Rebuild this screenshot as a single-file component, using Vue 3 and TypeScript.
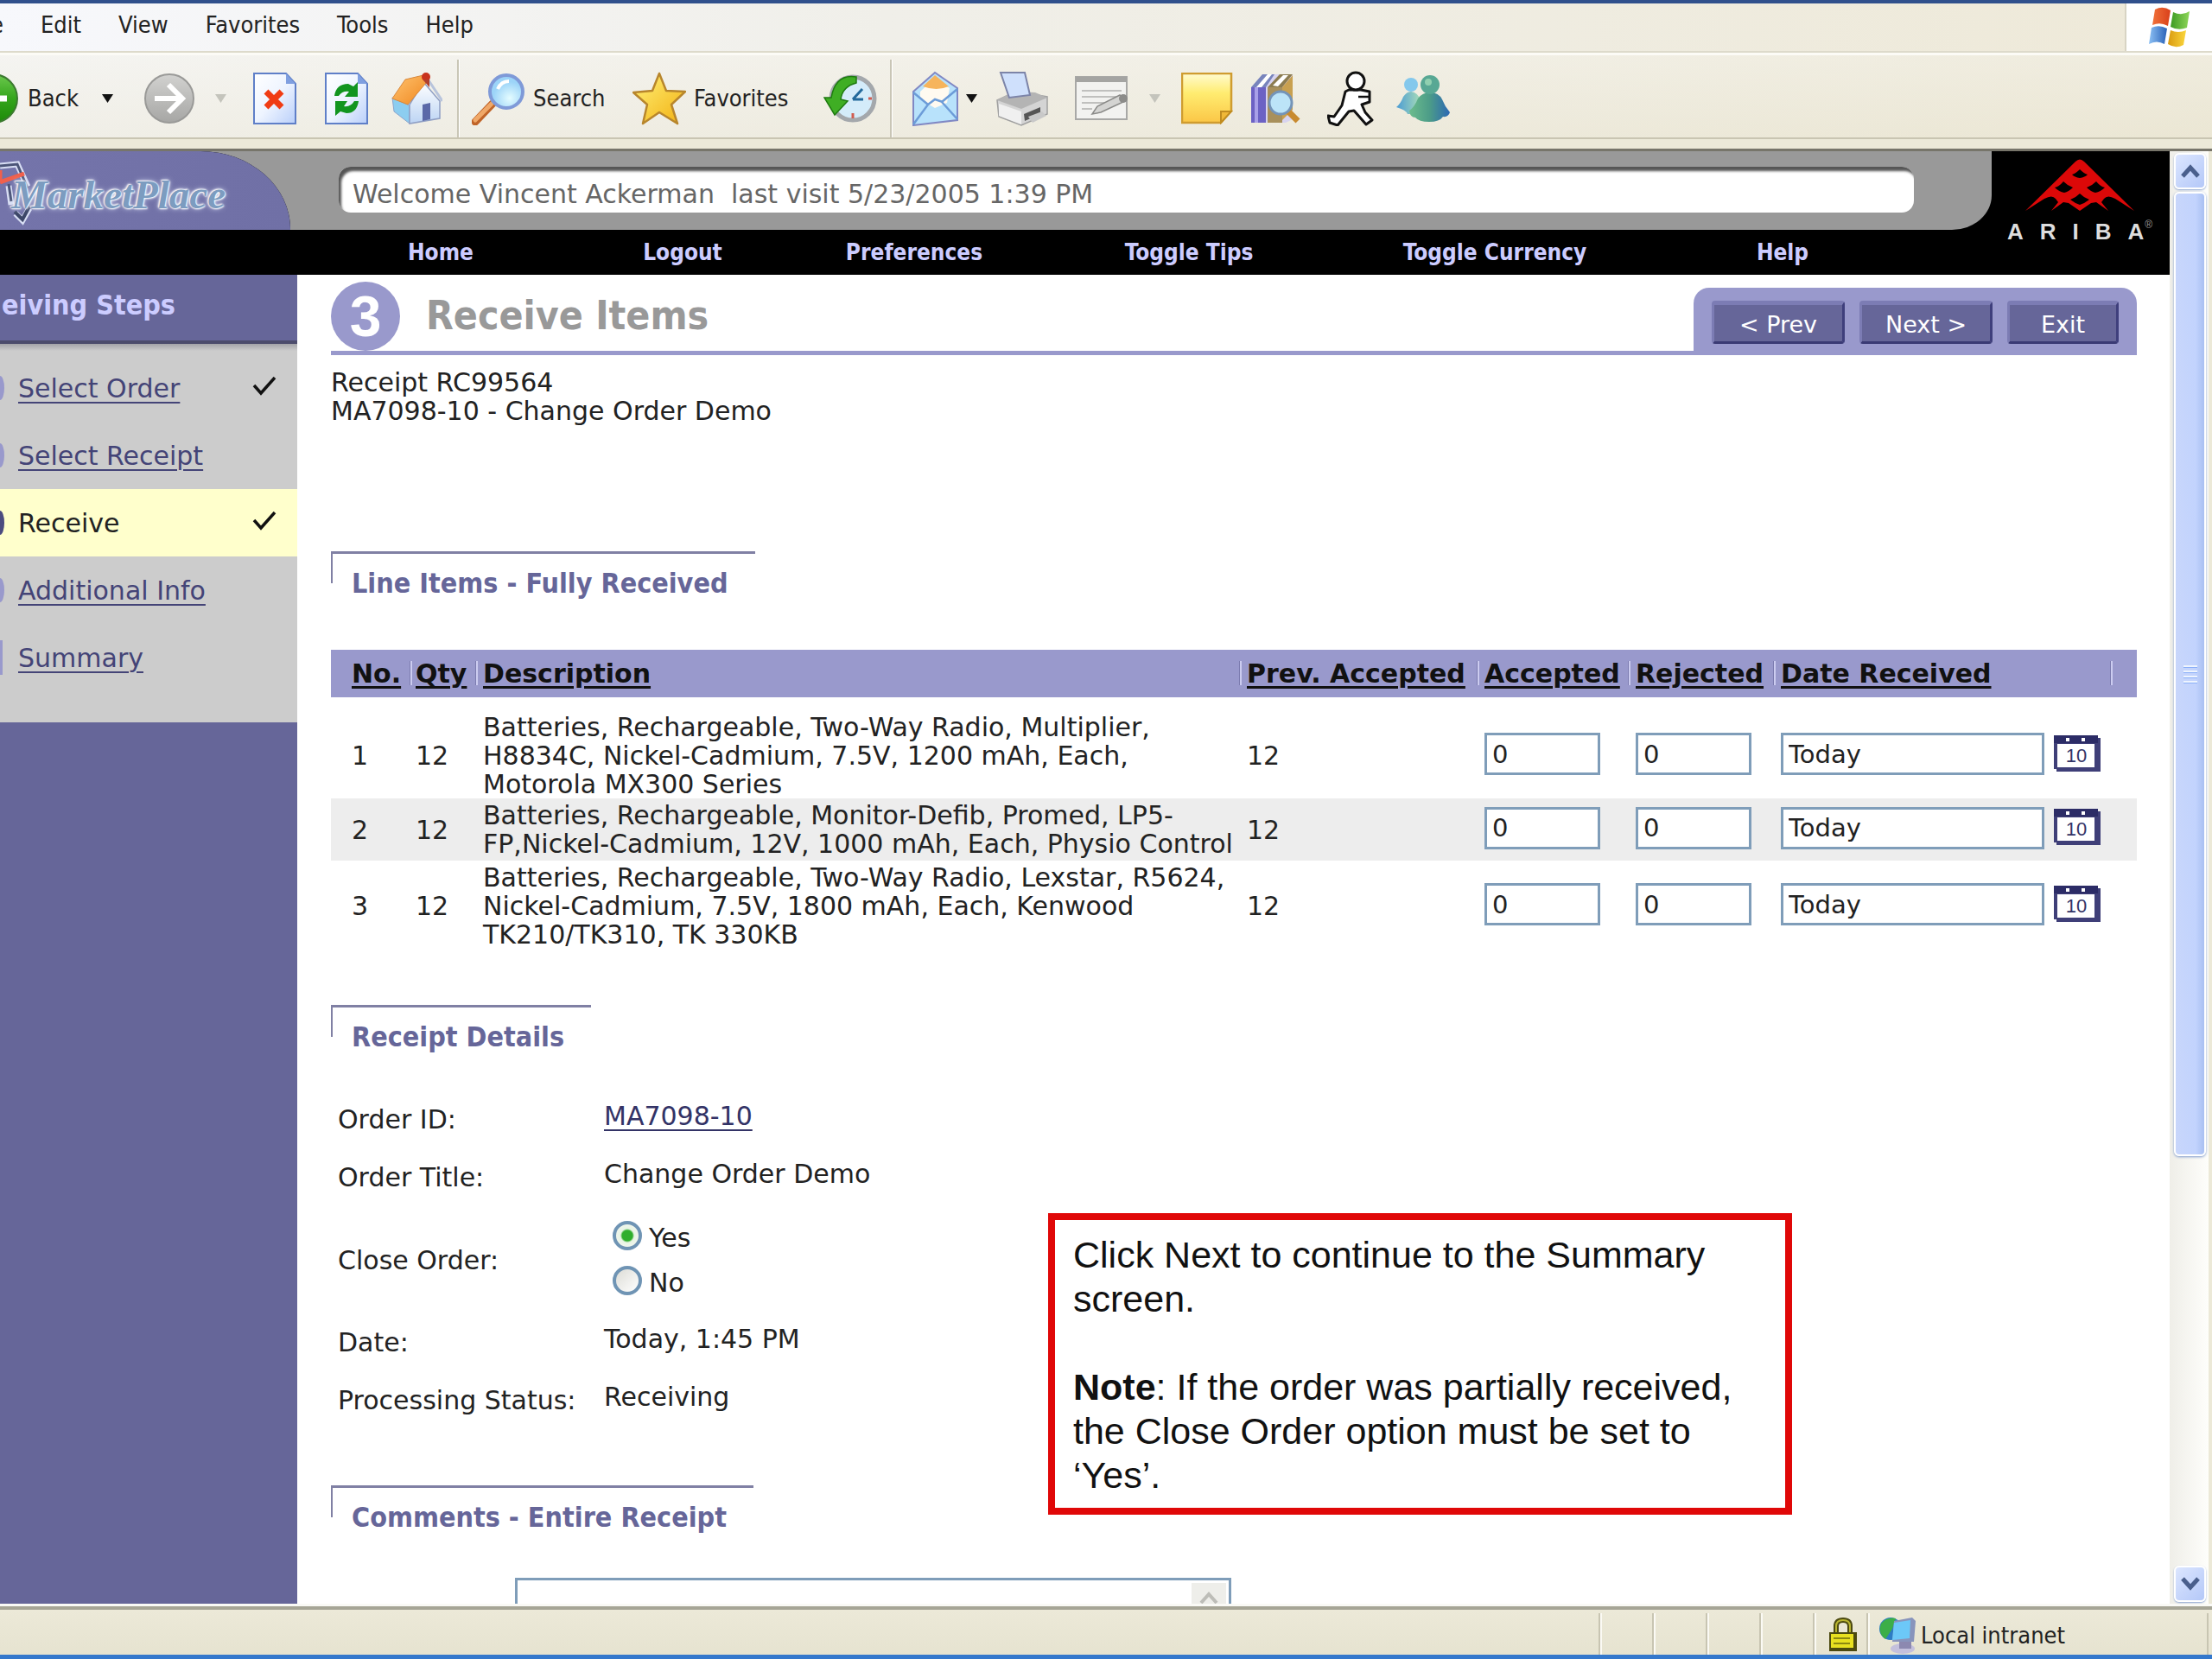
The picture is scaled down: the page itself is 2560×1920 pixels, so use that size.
<script setup lang="ts">
import { ref } from 'vue'

interface LineItem {
  no: number
  qty: number
  description: string
  prevAccepted: number
  accepted: string
  rejected: string
  date: string
}

interface Step {
  label: string
  done: boolean
  active: boolean
  shape: 'dot' | 'square'
}

const menus = ['Edit', 'View', 'Favorites', 'Tools', 'Help']
const navLinks = ['Home', 'Logout', 'Preferences', 'Toggle Tips', 'Toggle Currency', 'Help']
const columns = ['No.', 'Qty', 'Description', 'Prev. Accepted', 'Accepted', 'Rejected', 'Date Received']

const steps: Step[] = [
  { label: 'Select Order', done: true, active: false, shape: 'dot' },
  { label: 'Select Receipt', done: false, active: false, shape: 'dot' },
  { label: 'Receive', done: true, active: true, shape: 'dot' },
  { label: 'Additional Info', done: false, active: false, shape: 'dot' },
  { label: 'Summary', done: false, active: false, shape: 'square' },
]

const items = ref<LineItem[]>([
  {
    no: 1,
    qty: 12,
    description:
      'Batteries, Rechargeable, Two-Way Radio, Multiplier,\nH8834C, Nickel-Cadmium, 7.5V, 1200 mAh, Each,\nMotorola MX300 Series',
    prevAccepted: 12,
    accepted: '0',
    rejected: '0',
    date: 'Today',
  },
  {
    no: 2,
    qty: 12,
    description:
      'Batteries, Rechargeable, Monitor-Defib, Promed, LP5-\nFP,Nickel-Cadmium, 12V, 1000 mAh, Each, Physio Control',
    prevAccepted: 12,
    accepted: '0',
    rejected: '0',
    date: 'Today',
  },
  {
    no: 3,
    qty: 12,
    description:
      'Batteries, Rechargeable, Two-Way Radio, Lexstar, R5624,\nNickel-Cadmium, 7.5V, 1800 mAh, Each, Kenwood\nTK210/TK310, TK 330KB',
    prevAccepted: 12,
    accepted: '0',
    rejected: '0',
    date: 'Today',
  },
])

const closeOrder = ref('yes')
const comments = ref('')
</script>

<template>
  <div class="window">
    <nav class="menubar" aria-label="Browser menu">
      <span class="menu-cut">e</span>
      <button v-for="m in menus" :key="m" type="button">{{ m }}</button>
      <span class="flag-box">
        <svg width="52" height="48" viewBox="0 0 52 48">
          <defs>
            <linearGradient id="fr" x1="0" x2="1"><stop offset="0" stop-color="#f0713a" /><stop offset="1" stop-color="#d9401a" /></linearGradient>
            <linearGradient id="fg" x1="0" x2="1"><stop offset="0" stop-color="#3c9a22" /><stop offset="1" stop-color="#8fd65a" /></linearGradient>
            <linearGradient id="fb" x1="0" x2="1"><stop offset="0" stop-color="#8cc0f4" /><stop offset="1" stop-color="#2a62b8" /></linearGradient>
            <linearGradient id="fy" x1="0" x2="1"><stop offset="0" stop-color="#d99a10" /><stop offset="1" stop-color="#fbd63c" /></linearGradient>
          </defs>
          <path d="M9 3q9-5 18 1l-3 18q-9-5-18-1z" fill="url(#fr)" />
          <path d="M30 6q10 5 19-1l-3 19q-10 4-19-1z" fill="url(#fg)" />
          <path d="M5 24q9-4 18 1l-3 18q-9-5-18 0z" fill="url(#fb)" />
          <path d="M27 27q9 4 18 0l-3 17q-9 5-18-1z" fill="url(#fy)" />
        </svg>
      </span>
    </nav>

    <div class="toolbar">
      <button type="button" class="tool">
        <svg width="21" height="60" viewBox="0 0 21 60">
          <defs><linearGradient id="gb" x2="0" y2="1"><stop offset="0" stop-color="#6cc94e" /><stop offset=".5" stop-color="#35a51c" /><stop offset="1" stop-color="#1c8a08" /></linearGradient></defs>
          <circle cx="-8" cy="30" r="28" fill="url(#gb)" stroke="#3c7a30" stroke-width="2" />
          <path d="M0 30h8" stroke="#fff" stroke-width="7" />
        </svg>
        <span class="back-label">Back</span>
      </button>
      <button type="button" class="tool" aria-label="Back history"><svg width="13" height="10"><path d="M0 0h13L6.500 10z" fill="#111" /></svg></button>
      <button type="button" class="tool" aria-label="Forward">
        <svg width="60" height="60" viewBox="0 0 60 60">
          <defs><linearGradient id="gf" x2="0" y2="1"><stop offset="0" stop-color="#d2d2d0" /><stop offset="1" stop-color="#a6a6a4" /></linearGradient></defs>
          <circle cx="30" cy="30" r="28" fill="url(#gf)" stroke="#9a9a98" stroke-width="2" />
          <path d="M13 30h30M29 14l16 16-16 16" fill="none" stroke="#fff" stroke-width="6" />
        </svg>
      </button>
      <button type="button" class="tool" aria-label="Forward history"><svg width="13" height="10"><path d="M0 0h13L6.500 10z" fill="#c4c4bc" /></svg></button>
      <button type="button" class="tool" aria-label="Stop">
        <svg width="50" height="60" viewBox="0 0 50 60">
          <defs><linearGradient id="pg" x2="1" y2="1"><stop offset="0" stop-color="#fff" /><stop offset=".5" stop-color="#eef4ff" /><stop offset="1" stop-color="#b9cffa" /></linearGradient></defs>
          <path d="M1 1h37l11 12v46H1z" fill="url(#pg)" stroke="#5f7fc8" stroke-width="2" />
          <path d="M38 1l11 12H38z" fill="#7f9fe0" />
          <path d="M15 22l18 18M33 22L15 40" stroke="#f03c14" stroke-width="7" />
        </svg>
      </button>
      <button type="button" class="tool" aria-label="Refresh">
        <svg width="50" height="60" viewBox="0 0 50 60">
          <path d="M1 1h37l11 12v46H1z" fill="url(#pg)" stroke="#5f7fc8" stroke-width="2" />
          <path d="M38 1l11 12H38z" fill="#7f9fe0" />
          <path d="M11 27q2-14 16-14l6 3 5-5v17H23l5-6q-8-1-12 5z" fill="#12951f" />
          <path d="M39 33q-2 14-14 14l-7-2-6 5V33h14l-4 6q8 1 12-6z" fill="#12951f" />
        </svg>
      </button>
      <button type="button" class="tool" aria-label="Home page">
        <svg width="60" height="62" viewBox="0 0 60 62">
          <defs>
            <linearGradient id="hr" x2="1" y2="1"><stop offset="0" stop-color="#ffc470" /><stop offset="1" stop-color="#f08820" /></linearGradient>
            <linearGradient id="hw" x2="0" y2="1"><stop offset="0" stop-color="#fff" /><stop offset="1" stop-color="#bcd4f4" /></linearGradient>
          </defs>
          <path d="M2 30l20 9v21L4 46z" fill="#8ccdf0" stroke="#8aa4cc" />
          <path d="M38 12l19 22v20L22 60V38z" fill="url(#hw)" stroke="#8f9fc4" stroke-width="1.500" />
          <path d="M2 31L17 9l21-5 3 9-21 25z" fill="url(#hr)" stroke="#d8883c" />
          <path d="M40 4l20 30" stroke="#b8c4dc" stroke-width="3" />
          <path d="M37 38l9-2v19l-9 2z" fill="#5a68a8" />
          <circle cx="41" cy="6" r="5" fill="#c8321c" /><path d="M38 9h7v9l-7-8z" fill="#b0402c" />
        </svg>
      </button>
      <span class="sep"></span>
      <button type="button" class="tool">
        <svg width="62" height="62" viewBox="0 0 62 62">
          <defs><radialGradient id="lens" cx=".6" cy=".7"><stop offset="0" stop-color="#e4fcff" /><stop offset="1" stop-color="#9cd4f8" /></radialGradient></defs>
          <path d="M24 37L4 58" stroke="#c06428" stroke-width="9" stroke-linecap="round" />
          <path d="M23 37L4 56" stroke="#f0a868" stroke-width="5" stroke-linecap="round" />
          <circle cx="40" cy="23" r="19" fill="url(#lens)" stroke="#7f9ad8" stroke-width="4" />
          <path d="M30 20q4-9 13-9" stroke="#fff" stroke-width="4" fill="none" />
        </svg>
        <span class="label">Search</span>
      </button>
      <button type="button" class="tool">
        <svg width="62" height="62" viewBox="0 0 62 62">
          <defs><linearGradient id="st" x2="1" y2="1"><stop offset="0" stop-color="#fff27a" /><stop offset="1" stop-color="#f2b010" /></linearGradient></defs>
          <path d="M31 2l8 20 22 1-16 15 7 22-21-13-19 13 5-22L1 24l22-2z" fill="url(#st)" stroke="#b8862c" stroke-width="2.500" stroke-linejoin="round" />
        </svg>
        <span class="label">Favorites</span>
      </button>
      <button type="button" class="tool" aria-label="History">
        <svg width="62" height="60" viewBox="0 0 62 60">
          <circle cx="34" cy="30" r="25" fill="#d4ecfa" stroke="#a4a8ac" stroke-width="5" />
          <path d="M34 31l11-12M34 31h12" stroke="#246a9c" stroke-width="3" />
          <path d="M34 47v6M52 30h4" stroke="#d05c50" stroke-width="3" />
          <path d="M38 5Q14 1 9 29H1l12 20 15-16-8-2q2-15 18-19z" fill="#3fae24" stroke="#1e7a10" stroke-width="1.500" />
        </svg>
      </button>
      <span class="sep"></span>
      <button type="button" class="tool" aria-label="Mail">
        <svg width="54" height="64" viewBox="0 0 54 64">
          <path d="M1 24L26 2l26 18v37L1 63z" fill="#b8e2fb" stroke="#8088c4" stroke-width="2" />
          <path d="M9 24L26 8l17 12-3 17-14 6-17-10z" fill="#fffaf0" />
          <path d="M12 18L26 5l16 13q-14 6-30 0z" fill="#f6b45c" />
          <path d="M1 25l17 14L1 62M52 21L34 36l18 20M18 39l8-6 9 3" fill="none" stroke="#6c9cd8" stroke-width="2.500" />
        </svg>
      </button>
      <button type="button" class="tool" aria-label="Mail options"><svg width="13" height="10"><path d="M0 0h13L6.500 10z" fill="#111" /></svg></button>
      <button type="button" class="tool" aria-label="Print">
        <svg width="62" height="64" viewBox="0 0 62 64">
          <path d="M2 34l22-10 36 6v20L30 63 4 53z" fill="#d4d4d4" stroke="#a0a0a0" stroke-width="1.500" />
          <path d="M2 34l28 10 30-13-14-6-26-1z" fill="#b4b4b4" />
          <path d="M4 38l26 9v15L4 52z" fill="#f0f0f0" />
          <path d="M33 50l19-8v8l-18 8z" fill="#555" /><path d="M38 53l16-6 5 5-16 8z" fill="#c8c8c8" />
          <path d="M6 2h28l6 26-24 3z" fill="#cfe0fc" stroke="#7c84a8" stroke-width="2" />
        </svg>
      </button>
      <button type="button" class="tool" aria-label="Edit page">
        <svg width="64" height="52" viewBox="0 0 64 52">
          <path d="M1 1h59v49H1z" fill="#f2f2f0" stroke="#a8a8a6" stroke-width="2" />
          <path d="M1 1h59v6H1z" fill="#a4a4a2" />
          <path d="M8 17h46M8 24h40M8 31h30M8 38h12" stroke="#c0c0be" stroke-width="2" />
          <path d="M20 44l6-9 26-13 6 7-28 13z" fill="#d4d4d2" stroke="#8a8a88" stroke-width="1.500" />
          <circle cx="56" cy="26" r="5" fill="#8c8c8a" />
        </svg>
      </button>
      <button type="button" class="tool" aria-label="Edit options"><svg width="13" height="10"><path d="M0 0h13L6.500 10z" fill="#c4c4bc" /></svg></button>
      <button type="button" class="tool" aria-label="Notes">
        <svg width="60" height="60" viewBox="0 0 60 60">
          <defs><linearGradient id="nt" x2="0" y2="1"><stop offset="0" stop-color="#fffbd0" /><stop offset=".4" stop-color="#ffec70" /><stop offset="1" stop-color="#fbc646" /></linearGradient></defs>
          <path d="M1 1h57v43L46 58H1z" fill="url(#nt)" stroke="#cf9c30" stroke-width="2.500" />
          <path d="M46 58V45h12z" fill="#f0b838" stroke="#c08c20" stroke-width="2" />
        </svg>
      </button>
      <button type="button" class="tool" aria-label="Research">
        <svg width="60" height="58" viewBox="0 0 60 58">
          <path d="M1 16L15 1h34v52l-8 4H1z" fill="#d8d4f0" />
          <path d="M1 16h17v41H1z" fill="#6c62c4" /><path d="M5 16h4v41H5z" fill="#a8a0e8" />
          <path d="M1 16L14 1h14L18 16z" fill="#7884bc" /><path d="M7 16L20 1h5L13 16z" fill="#fff" />
          <path d="M20 16h17v41H20z" fill="#a8905c" /><path d="M20 16L34 1h15L37 16z" fill="#8c7c50" /><path d="M26 14L38 2h6L32 15z" fill="#fff" />
          <path d="M37 16L49 2v40l-12 12z" fill="#c8a050" />
          <path d="M43 43l12 12" stroke="#c88a30" stroke-width="7" />
          <circle cx="35" cy="34" r="13" fill="#bce4f8" stroke="#7494b8" stroke-width="3" />
        </svg>
      </button>
      <button type="button" class="tool" aria-label="Instant messenger">
        <svg width="54" height="64" viewBox="0 0 54 64">
          <g fill="#fff" stroke="#111" stroke-width="3" stroke-linejoin="round">
            <path d="M25 22h14l10 2v12l-9 3 4 9 8 9-7 5-14-16-6 1L12 63l-9-3-2-8 7 1 9-13 4-16z" />
            <circle cx="33" cy="12" r="10" />
          </g>
          <path d="M36 30h12" stroke="#111" stroke-width="2.500" />
        </svg>
      </button>
      <button type="button" class="tool" aria-label="Messenger">
        <svg width="64" height="56" viewBox="0 0 64 56">
          <defs>
            <linearGradient id="m1" x2="1"><stop offset="0" stop-color="#6cbc8c" /><stop offset=".5" stop-color="#4c9c88" /><stop offset="1" stop-color="#2c68b4" /></linearGradient>
            <linearGradient id="m2" x2="1"><stop offset="0" stop-color="#4c9cd4" /><stop offset="1" stop-color="#a8dcb8" /></linearGradient>
          </defs>
          <circle cx="18" cy="12" r="8" fill="#84c8ec" />
          <path d="M1 38q5-4 8-12 4-6 9-6 8 1 11 10l-1 16H14q-2-5-13-8z" fill="url(#m2)" />
          <path d="M16 42q6-4 10-14 5-7 14-7 10 0 14 8 3 8 9 15-2 6-8 5-4 6-16 6t-16-5q-6 0-7-8z" fill="url(#m1)" />
          <circle cx="40" cy="12" r="11" fill="#58a894" />
          <circle cx="38" cy="9" r="4" fill="#90d0b0" />
        </svg>
      </button>
    </div>
    <div class="band"></div>

    <div class="viewport">
      <div class="page">
        <header class="masthead">
          <div class="brand">
            <svg class="cart" width="50" height="78" viewBox="0 0 50 78">
              <g fill="none" stroke="#d8def4" stroke-width="7"><path d="M0 7l20-2 12 26M10 30l3 22M18 62l8 8 8-14" /></g>
              <path d="M0 7l20-2 12 28M10 28l3 20" fill="none" stroke="#4c5578" stroke-width="3" />
              <path d="M0 26l28-10M0 12v14" stroke="#f0604c" stroke-width="5" />
              <path d="M17 60l9 9 8-15" fill="none" stroke="#3c4668" stroke-width="4" />
            </svg>
            <span class="brand-name">MarketPlace</span>
          </div>
          <div class="banner">
            <p class="welcome">Welcome Vincent Ackerman&nbsp; last visit 5/23/2005 1:39 PM</p>
          </div>
          <div class="ariba">
            <svg width="126" height="60" viewBox="0 0 126 60">
              <path d="M58 3q5-5 10 0L126 60 104 46q-9-5-13 0l-3 4 8 10-14-10-6 1-13 9-13-9-6-1-14 10 8-10-3-4q-4-5-13 0L0 60z" fill="#dc0808" />
              <g fill="#000">
                <path d="M54 18q4-1 9-6 5 5 9 6-3 3-9 4-6-1-9-4z" />
                <path d="M34 33q5-1 10-7 5 5 11 7-5 5-10 6-6-1-11-6zM92 33q-5-1-10-7-5 5-11 7 5 5 10 6 6-1 11-6z" />
                <path d="M52 47q6-2 11-7 5 5 11 7-5 4-11 6-6-2-11-6z" />
              </g>
            </svg>
            <span class="ariba-name"><b v-for="(l, i) in 'ARIBA'" :key="i">{{ l }}</b><sup>®</sup></span>
          </div>
          <nav class="site-nav" aria-label="Site">
            <a v-for="n in navLinks" :key="n" href="#">{{ n }}</a>
          </nav>
        </header>

        <div class="columns">
          <aside class="sidebar">
            <h2>eiving Steps</h2>
            <ol>
              <li v-for="s in steps" :key="s.label" :class="{ active: s.active }">
                <i :class="s.shape"></i>
                <span v-if="s.active">{{ s.label }}</span>
                <a v-else href="#">{{ s.label }}</a>
                <svg v-if="s.done" width="28" height="22" viewBox="0 0 28 22"><path d="M2 10l8 9L26 1" fill="none" stroke="#111" stroke-width="3.500" /></svg>
              </li>
            </ol>
          </aside>

          <main>
            <div class="title-row">
              <span class="step-no">3</span>
              <h1>Receive Items</h1>
              <div class="actions">
                <button type="button">&lt; Prev</button>
                <button type="button">Next &gt;</button>
                <button type="button" class="exit">Exit</button>
              </div>
            </div>
            <p class="receipt">Receipt RC99564<br />MA7098-10 - Change Order Demo</p>

            <h3>Line Items - Fully Received</h3>
            <table>
              <colgroup>
                <col class="c-no" /><col class="c-qty" /><col /><col class="c-prev" /><col class="c-acc" /><col class="c-rej" /><col class="c-date" /><col class="c-end" />
              </colgroup>
              <thead>
                <tr>
                  <th v-for="c in columns" :key="c" scope="col"><a href="#">{{ c }}</a></th>
                  <td></td>
                </tr>
              </thead>
              <tbody>
                <tr v-for="r in items" :key="r.no">
                  <td>{{ r.no }}</td>
                  <td>{{ r.qty }}</td>
                  <td class="desc">{{ r.description }}</td>
                  <td>{{ r.prevAccepted }}</td>
                  <td><input v-model="r.accepted" type="text" class="num" :aria-label="`Accepted, line ${r.no}`" /></td>
                  <td><input v-model="r.rejected" type="text" class="num" :aria-label="`Rejected, line ${r.no}`" /></td>
                  <td colspan="2">
                    <div class="date-cell">
                      <input v-model="r.date" type="text" class="date" :aria-label="`Date received, line ${r.no}`" />
                      <button type="button" class="cal" aria-label="Pick a date">
                        <svg width="54" height="42" viewBox="0 0 54 42">
                          <path d="M0 0h51v3h3v39H3v-3H0z" fill="#3f3f78" />
                          <path d="M4 10h43v27H4z" fill="#fff" />
                          <path d="M0 0h51v9H0z" fill="#2c2c66" />
                          <path d="M14 3h4v4h-4zM32 3h4v4h-4z" fill="#fff" />
                          <text x="26" y="31" text-anchor="middle" font-size="22" fill="#333366">10</text>
                        </svg>
                      </button>
                    </div>
                  </td>
                </tr>
              </tbody>
            </table>

            <h3 class="details-head">Receipt Details</h3>
            <dl>
              <dt>Order ID:</dt>
              <dd><a href="#">MA7098-10</a></dd>
              <dt>Order Title:</dt>
              <dd>Change Order Demo</dd>
              <dt>Close Order:</dt>
              <dd class="options">
                <label><input v-model="closeOrder" type="radio" name="close" value="yes" />Yes</label>
                <label><input v-model="closeOrder" type="radio" name="close" value="no" />No</label>
              </dd>
              <dt>Date:</dt>
              <dd>Today, 1:45 PM</dd>
              <dt>Processing Status:</dt>
              <dd>Receiving</dd>
            </dl>

            <h3 class="comments-head">Comments - Entire Receipt</h3>
            <div class="comment-box">
              <textarea v-model="comments" aria-label="Comments - Entire Receipt"></textarea>
              <div class="comment-scroll">
                <svg width="22" height="14" viewBox="0 0 22 14"><path d="M2 13l9-10 9 10" fill="none" stroke="#bdbdb8" stroke-width="4" /></svg>
              </div>
            </div>
          </main>
        </div>
      </div>

      <div class="scrollbar">
        <button type="button" aria-label="Scroll up"><svg width="22" height="16" viewBox="0 0 22 16"><path d="M2 14l9-10 9 10" fill="none" stroke="#4a5f8c" stroke-width="5" /></svg></button>
        <div class="thumb"><i></i><i></i><i></i><i></i></div>
        <button type="button" aria-label="Scroll down"><svg width="22" height="16" viewBox="0 0 22 16"><path d="M2 2l9 10 9-10" fill="none" stroke="#4a5f8c" stroke-width="5" /></svg></button>
      </div>
    </div>

    <footer class="status">
      <span class="pane"></span><span class="pane"></span><span class="pane"></span><span class="pane"></span>
      <span class="pane lock">
        <svg width="34" height="40" viewBox="0 0 34 40">
          <path d="M9 18v-8q0-7 8-7t8 7v8" fill="none" stroke="#4c4a10" stroke-width="6" /><path d="M9 18v-8q0-7 8-7t8 7v8" fill="none" stroke="#b8b430" stroke-width="2" />
          <path d="M1 17h32v22H1z" fill="#4c4a10" /><path d="M3 19h26v16H3z" fill="#e8e020" />
          <path d="M6 24h19M6 30h19" stroke="#8c8810" stroke-width="2" />
        </svg>
      </span>
      <span class="pane zone">
        <svg width="44" height="44" viewBox="0 0 44 44">
          <circle cx="14" cy="14" r="13" fill="#2c7cc4" /><path d="M3 8Q10 0 20 2l-4 12-8 12Q-1 20 3 8z" fill="#3cae48" />
          <ellipse cx="28" cy="37" rx="14" ry="6" fill="#c4c0dc" /><path d="M24 28h14v9H24z" fill="#8c88b0" />
          <path d="M18 5l21-4 4 4-2 24-25 0z" fill="#8894bc" /><path d="M18 7l19-3-1 21-20 2z" fill="#6cc8f8" />
        </svg>
        <span>Local intranet</span>
      </span>
    </footer>

    <aside class="callout">
      <p>Click Next to continue to the Summary<br />screen.</p>
      <p><b>Note</b>: If the order was partially received,<br />the Close Order option must be set to<br />‘Yes’.</p>
    </aside>
  </div>
</template>

<style>
body {
  margin: 0;
  background: #ece9d8;
}
</style>

<style scoped>
.window {
  --ui: 'DejaVu Sans Condensed', 'DejaVu Sans', sans-serif;
  --body: 'DejaVu Sans', sans-serif;
  position: relative;
  display: flex;
  flex-direction: column;
  height: 100vh;
  overflow: hidden;
  box-sizing: border-box;
  border-top: 4px solid #30508c;
  border-bottom: 5px solid #3478cc;
  background: #ece9d8;
  color: #222;
  font: 30px/33px var(--body);
}
.window * {
  box-sizing: border-box;
}
h1,
h2,
h3,
p,
ol,
dl,
dd {
  margin: 0;
  padding: 0;
}
button {
  border: 0;
  padding: 0;
  background: none;
  color: inherit;
  font: inherit;
}
svg {
  display: block;
  flex: none;
}

/* browser chrome */
.menubar {
  flex: 0 0 57px;
  display: flex;
  align-items: center;
  gap: 43px;
  border-bottom: 2px solid #dddacb;
  background: linear-gradient(90deg, #f7f8fc, #f0efe9 40%, #eee9d8);
  font: 27px/32px var(--ui);
  color: #222;
}
.menubar > button,
.menu-cut {
  padding-bottom: 5px;
}
.menu-cut {
  width: 4px;
  display: flex;
  justify-content: flex-end;
  overflow: hidden;
}
.flag-box {
  align-self: stretch;
  width: 101px;
  margin-left: auto;
  display: flex;
  align-items: center;
  justify-content: center;
  background: #fff;
  border-left: 2px solid #d8d4c4;
}
.toolbar {
  flex: 0 0 100px;
  display: grid;
  grid-template-columns: 118px 48px 83px 44px 83px 76px 77px 17px 186px 221px 77px 26px 62px 34px 92px 86px 37px 80px 89px 79px 1fr;
  align-items: center;
  justify-items: start;
  padding-top: 4px;
  border-top: 3px solid #fcfbf6;
  border-bottom: 2px solid #c9c5b2;
  background: linear-gradient(90deg, rgba(248, 248, 250, 0.5), rgba(238, 232, 212, 0.5)), linear-gradient(#f1f0e8, #e8e5d4);
  font: 27px/32px var(--ui);
}
.tool {
  display: flex;
  align-items: center;
}
.back-label {
  padding-left: 11px;
}
.label {
  padding-left: 9px;
}
.sep {
  width: 3px;
  height: 90px;
  background: #c9c6b6;
  border-right: 1px solid #fff;
}
.band {
  flex: 0 0 14px;
  background: #ece9d8;
  border-bottom: 3px solid #77756a;
}

/* page area */
.viewport {
  flex: 1 1 0;
  min-height: 0;
  display: flex;
  padding-right: 4px;
  border-bottom: 3px solid #fafaf6;
}
.page {
  flex: 1;
  min-width: 0;
  display: flex;
  flex-direction: column;
  overflow: hidden;
  background: #fff;
}
.masthead {
  flex: none;
  display: grid;
  grid-template-columns: 336px 1fr 206px;
  grid-template-rows: 91px 52px;
  background: #000;
}
.brand {
  position: relative;
  background: linear-gradient(90deg, #7474aa, #7070a6);
  border-top-right-radius: 104px 90px;
  box-shadow: 0 0 0 100px #999;
  clip-path: inset(0);
  padding: 22px 0 0 13px;
}
.cart {
  position: absolute;
  left: 0;
  top: 10px;
}
.brand-name {
  position: relative;
  font: italic 700 47px/56px 'Liberation Serif', serif;
  color: #7c9cc0;
  text-shadow: 0 0 2px #fff, 1px 1px 2px #fff, -1px -1px 2px #fff, 0 0 6px #dfe8ff;
}
.banner {
  padding: 18px 90px 20px 56px;
  background: #999;
  border-bottom-right-radius: 46px 40px;
}
.welcome {
  height: 53px;
  padding: 10px 16px 0 16px;
  border-radius: 14px;
  background: #fff;
  box-shadow: inset 3px 5px 3px #555;
  color: #666;
  display: flex;
  align-items: center;
}
.ariba {
  grid-row: 1 / 3;
  grid-column: 3;
  display: flex;
  flex-direction: column;
  align-items: center;
  padding: 9px 16px 0 14px;
}
.ariba-name {
  display: flex;
  justify-content: space-between;
  width: 168px;
  margin-top: 9px;
  font: 26px/30px 'Liberation Sans', sans-serif;
  color: #ddd;
}
.ariba-name sup {
  margin-left: -18px;
  font-size: 12px;
  line-height: 14px;
  color: #999;
}
.site-nav {
  grid-row: 2;
  grid-column: 1 / 3;
  display: grid;
  grid-template-columns: 280fr 280fr 256fr 380fr 328fr 338fr;
  align-items: center;
  justify-items: center;
  padding: 0 73px 0 370px;
  font: 700 26px/32px var(--ui);
}
.site-nav a {
  color: #ccccff;
  text-decoration: none;
}
.columns {
  flex: 1;
  min-height: 0;
  display: flex;
}

/* sidebar */
.sidebar {
  flex: 0 0 344px;
  background: #666699;
}
.sidebar h2 {
  height: 80px;
  padding: 16px 0 0 2px;
  border-bottom: 4px solid #4c4c6c;
  font: 700 32px/38px var(--ui);
  color: #ccccff;
}
.sidebar ol {
  list-style: none;
  padding: 12px 0 36px;
  background: linear-gradient(#a4a4a8, #ccc 8px);
}
.sidebar li {
  display: flex;
  align-items: center;
  height: 78px;
  padding-right: 24px;
}
.sidebar li svg {
  margin: 0 0 4px auto;
}
.sidebar li.active {
  background: #ffffcc;
}
.sidebar a {
  color: #444477;
  text-decoration-thickness: 2px;
  text-underline-offset: 5px;
}
.sidebar i {
  width: 5px;
  height: 28px;
  margin-right: 16px;
  background: #9999cc;
}
.sidebar .dot {
  border-radius: 0 5px 5px 0 / 0 14px 14px 0;
}
.sidebar .square {
  width: 3px;
  height: 40px;
  margin-right: 18px;
}
.sidebar .active i {
  background: #4c4c80;
}

/* content */
main {
  flex: 1;
  min-width: 0;
  padding: 0 38px 0 39px;
}
.title-row {
  height: 93px;
  display: flex;
  align-items: flex-end;
  border-bottom: 5px solid #9999cc;
}
.step-no {
  width: 80px;
  height: 80px;
  border-radius: 50%;
  background: #9999cc;
  color: #fff;
  font: 700 66px/80px 'Liberation Sans', sans-serif;
  text-align: center;
}
h1 {
  margin-left: 30px;
  font: 700 46px/82px var(--ui);
  color: #999;
}
.actions {
  display: flex;
  gap: 17px;
  height: 78px;
  margin: 0 0 -5px auto;
  padding: 15px 21px 0;
  border-radius: 18px 18px 0 0;
  background: #9999cc;
}
.actions button {
  width: 154px;
  height: 50px;
  padding-top: 2px;
  border: 3px solid;
  border-color: #7c7cb4 #3f3f7c #3a3a74 #7c7cb4;
  border-top-width: 5px;
  border-radius: 4px;
  background: #666699;
  color: #fff;
  font-size: 27px;
}
.actions .exit {
  width: 129px;
}
.receipt {
  padding: 15px 0 146px;
}
h3 {
  position: relative;
  width: fit-content;
  margin-bottom: 58px;
  padding: 15px 31px 0 24px;
  border-top: 3px solid #8080a4;
  font: 700 32px/38px var(--ui);
  color: #666699;
}
h3::before {
  content: '';
  position: absolute;
  left: 0;
  top: 0;
  width: 2px;
  height: 34px;
  background: #8080a4;
}
.details-head {
  margin: 62px 0 43px;
}
.comments-head {
  margin: 65px 0 51px;
}
table {
  width: 100%;
  table-layout: fixed;
  border-collapse: collapse;
}
.c-no {
  width: 91px;
}
.c-qty {
  width: 76px;
}
.c-prev {
  width: 275px;
}
.c-acc {
  width: 175px;
}
.c-rej {
  width: 168px;
}
.c-date {
  width: 390px;
}
.c-end {
  width: 31px;
}
thead tr {
  height: 55px;
  background: #9999cc;
}
th,
td {
  padding: 0 0 0 9px;
  text-align: left;
  vertical-align: middle;
  white-space: nowrap;
}
th:first-child,
td:first-child {
  padding-left: 24px;
}
th:nth-child(2),
td:nth-child(2) {
  padding-left: 7px;
}
thead th:not(:first-child),
thead td {
  background: linear-gradient(90deg, #7c7cb0 1px, #ccccf0 1px) no-repeat 0 13px / 3px 28px;
}
th a {
  color: #111;
  text-decoration-thickness: 3px;
  text-underline-offset: 4px;
}
tbody tr:nth-child(even) {
  background: #ededed;
}
tbody td {
  padding-top: 3px;
  padding-bottom: 3px;
}
tbody tr:first-child td {
  padding-top: 18px;
  padding-bottom: 0;
}
.desc {
  white-space: pre;
}
.num,
.date {
  display: block;
  height: 49px;
  margin-bottom: 4px;
  padding: 0 6px;
  border: 3px solid #7f9db9;
  background: #fff;
  color: #222;
  font: 29px/40px var(--body);
}
.num {
  width: 134px;
}
.date {
  width: 305px;
}
.date-cell {
  display: flex;
  align-items: center;
  gap: 11px;
}
.cal {
  margin-bottom: 6px;
  font-family: 'Liberation Sans', sans-serif;
}
dl {
  display: grid;
  grid-template-columns: 308px 1fr;
  grid-template-rows: 67px 67px 124px 67px 67px;
  align-items: center;
  padding-left: 8px;
}
dd {
  padding-bottom: 8px;
}
dd a {
  color: #333366;
  text-decoration-thickness: 2px;
  text-underline-offset: 5px;
}
.options {
  display: grid;
  gap: 14px;
  padding: 0 0 0 10px;
}
.options label {
  display: flex;
  align-items: center;
  gap: 8px;
}
.options input {
  appearance: none;
  width: 34px;
  height: 34px;
  margin: 0 0 4px;
  border: 4px solid #6f94b4;
  border-radius: 50%;
  background: linear-gradient(135deg, #dcdcd6, #fff);
}
.options input:checked {
  background: radial-gradient(circle, #2fae2c 0 6px, #e8f4e4 8px, #f8f8f4);
}
.comment-box {
  display: flex;
  width: 829px;
  height: 240px;
  margin-left: 213px;
  border: 3px solid #7f9db9;
}
textarea {
  flex: 1;
  border: 0;
  padding: 6px;
  background: #fff;
  resize: none;
  font: inherit;
}
.comment-scroll {
  width: 40px;
  margin: 3px 3px 0 0;
  padding: 10px 0 0 9px;
  background: #eeeeea;
}

/* scrollbar */
.scrollbar {
  flex: 0 0 45px;
  display: flex;
  flex-direction: column;
  padding: 2px 3px 2px 5px;
  background: linear-gradient(90deg, #efeee8, #fefefb);
}
.scrollbar button {
  flex: 0 0 42px;
  display: flex;
  align-items: center;
  justify-content: center;
  border: 2px solid #fff;
  border-radius: 6px;
  background: linear-gradient(135deg, #dce6ff, #b4c8f8);
  box-shadow: 0 1px 2px #8ca4d0;
}
.thumb {
  flex: 0 1 1116px;
  display: flex;
  flex-direction: column;
  align-items: center;
  justify-content: center;
  gap: 3px;
  margin: 3px 0 auto;
  border: 2px solid #fff;
  border-radius: 6px;
  background: linear-gradient(90deg, #c8d6fb, #c2d3fd 70%, #a9c0f2);
  box-shadow: 0 1px 3px #7c98cc;
}
.thumb i {
  width: 16px;
  height: 3px;
  background: #eef4fe;
  border-bottom: 1px solid #8cb0f8;
}

/* status bar */
.status {
  flex: 0 0 56px;
  display: flex;
  justify-content: flex-end;
  padding-right: 4px;
  border-top: 4px solid #a6a596;
  background: linear-gradient(#ece9d8, #e6e3d0);
  font: 27px/32px var(--ui);
}
.pane {
  width: 62px;
  margin-top: 4px;
  border-left: 2px solid #c8c5b2;
  box-shadow: inset 2px 0 #fbfaf4;
}
.lock {
  padding: 5px 0 0 16px;
}
.zone {
  width: 396px;
  display: flex;
  align-items: center;
  gap: 5px;
  padding: 4px 0 0 12px;
  border-right: 2px solid #c8c5b2;
}

.callout {
  position: absolute;
  left: 1213px;
  top: 1400px;
  display: flex;
  flex-direction: column;
  gap: 51px;
  width: 861px;
  padding: 15px 21px 12px;
  border: 8px solid #e00808;
  background: #fff;
  color: #111;
  font: 43px/51px 'Liberation Sans', sans-serif;
  white-space: nowrap;
}
</style>
